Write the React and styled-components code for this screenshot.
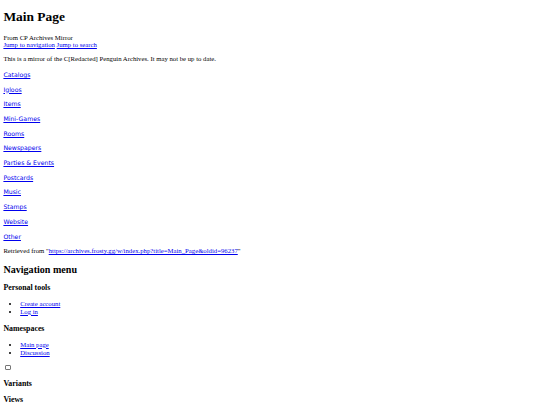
import React from 'react';
import styled, { createGlobalStyle } from 'styled-components';

const GlobalStyle = createGlobalStyle`
    body {
        margin: 3.4px;
        font-family: "Liberation Serif", serif;
        font-size: 6.72px;
        color: #000;
        background: #fff;
    }
`;

const Title = styled.h1`
    font-size: 13.44px;
    margin: 6px 0 9px;
`;

const Sub = styled.div``;

const Link = styled.a`
    color: #0000ee;
    text-decoration: underline;
    font-family: ${p => (p.$sans ? '"DejaVu Sans", sans-serif' : 'inherit')};
    font-size: ${p => (p.$sans ? '6.2px' : 'inherit')};
`;

const Para = styled.p`
    margin: ${p => (p.$nav ? '7px 0' : '6.72px 0 8.7px')};
    line-height: ${p => (p.$nav ? '7.7px' : 'normal')};
`;

const Heading2 = styled.h2`
    font-size: 10.08px;
    margin: 9.4px 0 8.4px;
`;

const Heading3 = styled.h3`
    font-size: 7.86px;
    margin: 6.9px 0;
`;

const List = styled.ul`
    margin: 7.9px 0 7.9px;
    padding-left: 16.8px;
    line-height: 8px;
`;

const Check = styled.input`
    appearance: none;
    display: block;
    width: 5.5px;
    height: 5.5px;
    margin: 4px 0 9px 1.7px;
    border: 0.8px solid #767676;
    border-radius: 1px;
    background: #fff;
    box-sizing: border-box;
`;

const categories = [
    'Catalogs', 'Igloos', 'Items', 'Mini-Games', 'Rooms', 'Newspapers',
    'Parties & Events', 'Postcards', 'Music', 'Stamps', 'Website', 'Other',
];

const App = () => {
    return (
        <>
            <GlobalStyle />
            <Title>Main Page</Title>
            <Sub>From CP Archives Mirror</Sub>
            <Sub>
                <Link href="#">Jump to navigation</Link> <Link href="#">Jump to search</Link>
            </Sub>
            <Para>This is a mirror of the C[Redacted] Penguin Archives. It may not be up to date.</Para>
            {categories.map(c => (
                <Para $nav key={c}><Link $sans href="#">{c}</Link></Para>
            ))}
            <Sub>
                Retrieved from "<Link href="#">https://archives.frosty.gg/w/index.php?title=Main_Page&amp;oldid=96237</Link>"
            </Sub>
            <Heading2>Navigation menu</Heading2>
            <Heading3>Personal tools</Heading3>
            <List>
                <li><Link href="#">Create account</Link></li>
                <li><Link href="#">Log in</Link></li>
            </List>
            <Heading3>Namespaces</Heading3>
            <List>
                <li><Link href="#">Main page</Link></li>
                <li><Link href="#">Discussion</Link></li>
            </List>
            <Check type="checkbox" />
            <Heading3>Variants</Heading3>
            <Heading3>Views</Heading3>
        </>
    );
};

export default App;
